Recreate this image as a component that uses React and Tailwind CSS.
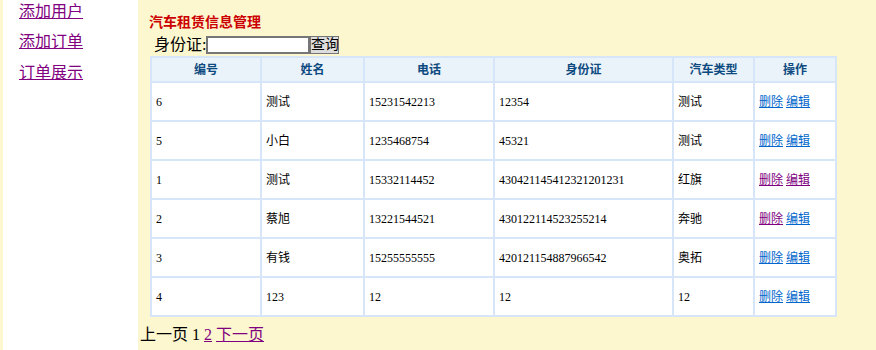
export default function App() {
  const rows = [
    ["6", "测试", "15231542213", "12354", "测试", "b", "b"],
    ["5", "小白", "1235468754", "45321", "测试", "b", "b"],
    ["1", "测试", "15332114452", "430421145412321201231", "红旗", "p", "p"],
    ["2", "蔡旭", "13221544521", "430122114523255214", "奔驰", "p", "b"],
    ["3", "有钱", "15255555555", "420121154887966542", "奥拓", "b", "b"],
    ["4", "123", "12", "12", "12", "b", "b"],
  ];
  const font = { fontFamily: '"Liberation Serif", "Noto Sans CJK SC", serif' };
  const widths = ["w-[110px]", "w-[103px]", "w-[130px]", "w-[179px]", "w-[81px]", "w-[82px]"];
  const heads = ["编号", "姓名", "电话", "身份证", "汽车类型", "操作"];
  const linkColor = (c) => (c === "p" ? "text-[#800080]" : "text-[#0066cc]");
  return (
    <div className="flex h-[350px] w-[876px] overflow-hidden" style={font}>
      <div className="w-[138px] shrink-0 border-l-[3px] border-[#fdf7cf] bg-white pl-[16px] pt-[2px] text-[16px] leading-[20px]">
        <div><a className="text-[#800080] underline">添加用户</a></div>
        <div className="mt-[10px]"><a className="text-[#800080] underline">添加订单</a></div>
        <div className="mt-[11px]"><a className="text-[#800080] underline">订单展示</a></div>
      </div>
      <div className="flex-1 bg-[#fdf7cf]">
        <div className="ml-[11px] mt-[14px] text-[14px] font-bold leading-[17px] text-[#cc0000]">汽车租赁信息管理</div>
        <div className="ml-[16px] mt-[5px] flex h-[18px] items-center text-[16px] leading-[18px] text-black">
          <span>身份证:</span>
          <input className="h-[18px] w-[104px] border-2 border-solid border-[#767676] bg-white" />
          <button className="flex h-[18px] w-[29px] items-center justify-center overflow-hidden whitespace-nowrap border border-[#767676] bg-[#dddddd] p-0 text-[14px] leading-[14px] text-black" style={font}>查询</button>
        </div>
        <table className="ml-[12px] mt-[2px] border-collapse border-2 border-[#d6e6f8] bg-white text-[12px]">
          <thead>
            <tr className="h-[25px] bg-[#eaf2fa]">
              {heads.map((h, i) => (
                <th key={i} className={`${widths[i]} border-2 border-[#d6e6f8] p-0 text-center font-bold text-[#0d4a80]`}>{h}</th>
              ))}
            </tr>
          </thead>
          <tbody>
            {rows.map((r, ri) => (
              <tr key={ri} className="h-[39px]">
                {r.slice(0, 5).map((c, ci) => (
                  <td key={ci} className="border-2 border-[#d6e6f8] px-[4px] py-0 text-black">{c}</td>
                ))}
                <td className="border-2 border-[#d6e6f8] px-[4px] py-0">
                  <a className={`${linkColor(r[5])} underline`}>删除</a>{" "}
                  <a className={`${linkColor(r[6])} underline`}>编辑</a>
                </td>
              </tr>
            ))}
          </tbody>
        </table>
        <div className="ml-[2px] mt-[9px] text-[16px] leading-[18px] text-black">
          上一页 1 <a className="text-[#800080] underline">2</a> <a className="text-[#800080] underline">下一页</a>
        </div>
      </div>
    </div>
  );
}
